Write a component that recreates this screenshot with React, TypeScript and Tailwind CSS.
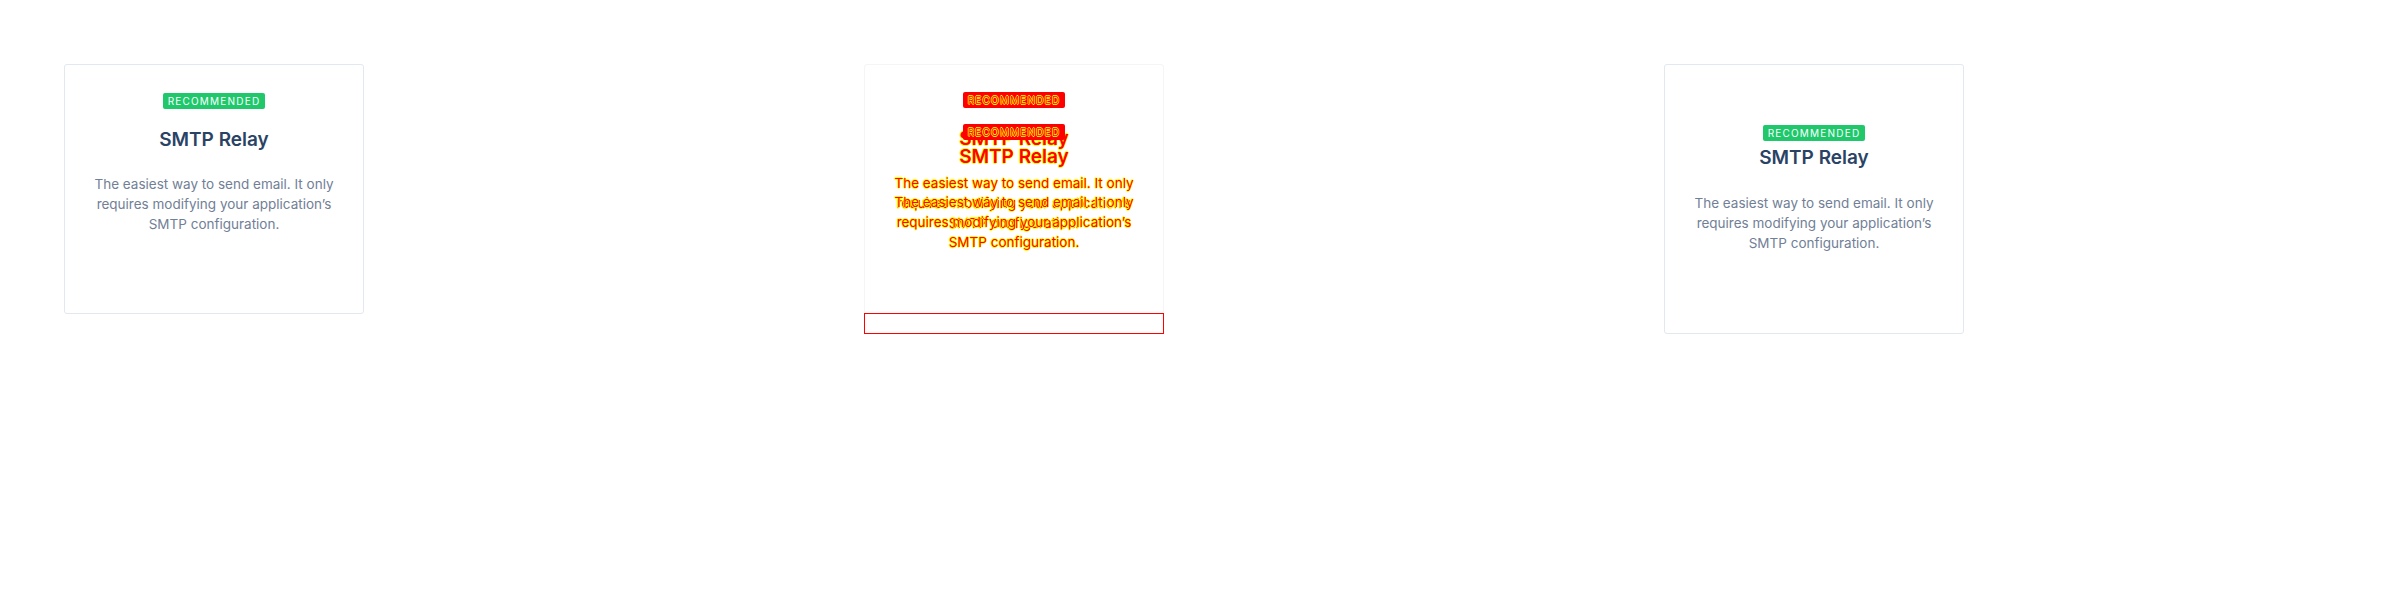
const font = "font-['Inter','Liberation_Sans',sans-serif]";

const diffText =
  "text-[#ff0000] [text-shadow:0.7px_0_#ff0,-0.7px_0_#ff0,0_0.7px_#ff0,0_-0.7px_#ff0]";

function Badge({ diff = false }: { diff?: boolean }) {
  return (
    <span
      className={
        diff
          ? `inline-flex h-4 w-[102px] items-center justify-center rounded-[2px] bg-[#ff0000] text-[10px] leading-none tracking-[0.12em] ${diffText}`
          : "inline-flex h-4 w-[102px] items-center justify-center rounded-[2px] bg-[#1ec86b] text-[10px] leading-none tracking-[0.12em] text-white"
      }
    >
      RECOMMENDED
    </span>
  );
}

function CardBody({ diff = false, tall = false }: { diff?: boolean; tall?: boolean }) {
  const titleCls = diff ? diffText : "text-[#2a4365]";
  const textCls = diff ? diffText : "text-[#718096]";
  return (
    <div className={`flex flex-col items-center px-5 text-center ${tall ? "pt-[60px]" : "pt-[28px]"}`}>
      <Badge diff={diff} />
      <h3 className={`${tall ? "mt-[3px]" : "mt-[17px]"} text-[19px] leading-[28px] font-semibold ${titleCls}`}>
        SMTP Relay
      </h3>
      <p className={`${tall ? "mt-[21px]" : "mt-[20px]"} w-[250px] text-[13.5px] leading-[20px] ${textCls}`}>
        The easiest way to send email. It only requires modifying your application’s SMTP configuration.
      </p>
    </div>
  );
}

export default function App() {
  return (
    <div className={`h-[600px] w-[2400px] bg-white ${font}`}>
      <div className="grid grid-cols-3 pt-16">
        <div className="pl-16">
          <div className="h-[250px] w-[300px] rounded-[3px] border border-[#e2e8f0] bg-white">
            <CardBody />
          </div>
        </div>

        <div className="pl-16">
          <div className="relative h-[270px] w-[300px]">
            <div className="absolute inset-x-0 top-0 h-[250px] rounded-[3px] border border-[#f5f5f5]" />
            <div className="absolute inset-x-0 top-0">
              <CardBody diff />
            </div>
            <div className="absolute inset-x-0 top-0">
              <CardBody diff tall />
            </div>
            <div className="absolute inset-x-0 top-[249px] h-[21px] border-[1.5px] border-[#ff0000]" />
          </div>
        </div>

        <div className="pl-16">
          <div className="h-[270px] w-[300px] rounded-[3px] border border-[#e2e8f0] bg-white">
            <CardBody tall />
          </div>
        </div>
      </div>
    </div>
  );
}
